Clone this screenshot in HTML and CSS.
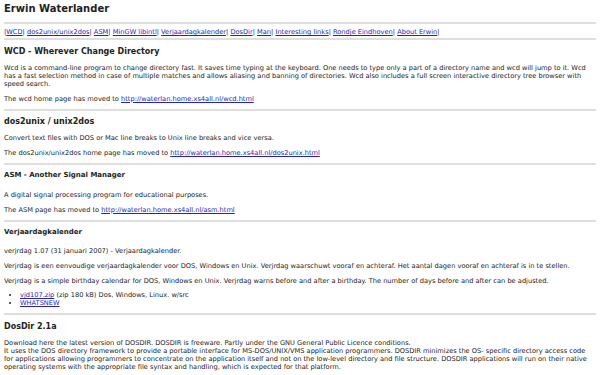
FILE: index.html
```html
<!DOCTYPE html>
<html>
<head>
    <title>Erwin Waterlander</title>
    <meta charset="UTF-8">
    <link rel="stylesheet" href="styles.css">
</head>
<body>
    <h1>Erwin Waterlander</h1>
    <hr>
    <div class="nav">|<a href="#wcd">WCD</a>| <a href="#dos2unix">dos2unix/unix2dos</a>| <a href="#asm">ASM</a>| <a href="#">MinGW libintl</a>| <a href="#verjaardag">Verjaardagkalender</a>| <a href="#dosdir">DosDir</a>| <a href="#">Man</a>| <a href="#">Interesting links</a>| <a href="#">Rondje Eindhoven</a>| <a href="#">About Erwin</a>|</div>
    <hr class="nav-rule">

    <h2 id="wcd">WCD - Wherever Change Directory</h2>
    <p>Wcd is a command-line program to change directory fast. It saves time typing at the keyboard. One needs to type only a part of a directory name and wcd will jump to it. Wcd has a fast selection method in case of multiple matches and allows aliasing and banning of directories. Wcd also includes a full screen interactive directory tree browser with speed search.</p>
    <p>The wcd home page has moved to <a href="#">http://waterlan.home.xs4all.nl/wcd.html</a></p>
    <hr>

    <h2 id="dos2unix">dos2unix / unix2dos</h2>
    <p>Convert text files with DOS or Mac line breaks to Unix line breaks and vice versa.</p>
    <p>The dos2unix/unix2dos home page has moved to <a href="#">http://waterlan.home.xs4all.nl/dos2unix.html</a></p>
    <hr>

    <h3 id="asm">ASM - Another Signal Manager</h3>
    <p>A digital signal processing program for educational purposes.</p>
    <p>The ASM page has moved to <a href="#">http://waterlan.home.xs4all.nl/asm.html</a></p>
    <hr>

    <h3 id="verjaardag">Verjaardagkalender</h3>
    <p>verjrdag 1.07 (31 januari 2007) - Verjaardagkalender.</p>
    <p>Verjrdag is een eenvoudige verjaardagkalender voor DOS, Windows en Unix. Verjrdag waarschuwt vooraf en achteraf. Het aantal dagen vooraf en achteraf is in te stellen.</p>
    <p>Verjrdag is a simple birthday calendar for DOS, Windows en Unix. Verjrdag warns before and after a birthday. The number of days before and after can be adjusted.</p>
    <ul>
        <li><a href="#">vjd107.zip</a> (zip 180 kB) Dos, Windows, Linux. w/src</li>
        <li><a href="#">WHATSNEW</a></li>
    </ul>
    <hr>

    <h2 id="dosdir">DosDir 2.1a</h2>
    <p>Download here the latest version of DOSDIR. DOSDIR is freeware. Partly under the GNU General Public Licence conditions.<br>
    It uses the DOS directory framework to provide a portable interface for MS-DOS/UNIX/VMS application programmers. DOSDIR minimizes the OS- specific directory access code for applications allowing programmers to concentrate on the application itself and not on the low-level directory and file structure. DOSDIR applications will run on their native operating systems with the appropriate file syntax and handling, which is expected for that platform.</p>
</body>
</html>
```

FILE: styles.css
```css
/* Plain homepage styles */
body {
    margin: 3px 4px 0;
    font-family: "DejaVu Sans", Verdana, sans-serif;
    font-size: 6.65px;
    line-height: 8px;
    color: #222;
    background: #fff;
}

a { color: #2424b8; }

h1 {
    font-size: 10px;
    line-height: 12px;
    margin: 0 0 7px;
}

h2 {
    font-size: 8px;
    line-height: 10px;
    margin: 6.5px 0 7px;
}

h3 {
    font-size: 7px;
    line-height: 8px;
    margin: 6px 0 11.5px;
}

p { margin: 7px 0 0; }

hr {
    border: 0;
    border-top: 2px solid #dedede;
    height: 0;
    margin: 6px 0 0;
}

.nav { margin-top: 4px; }

.nav-rule { margin-top: 2px; }

ul {
    margin: 6px 0 0;
    padding-left: 16px;
}
```
